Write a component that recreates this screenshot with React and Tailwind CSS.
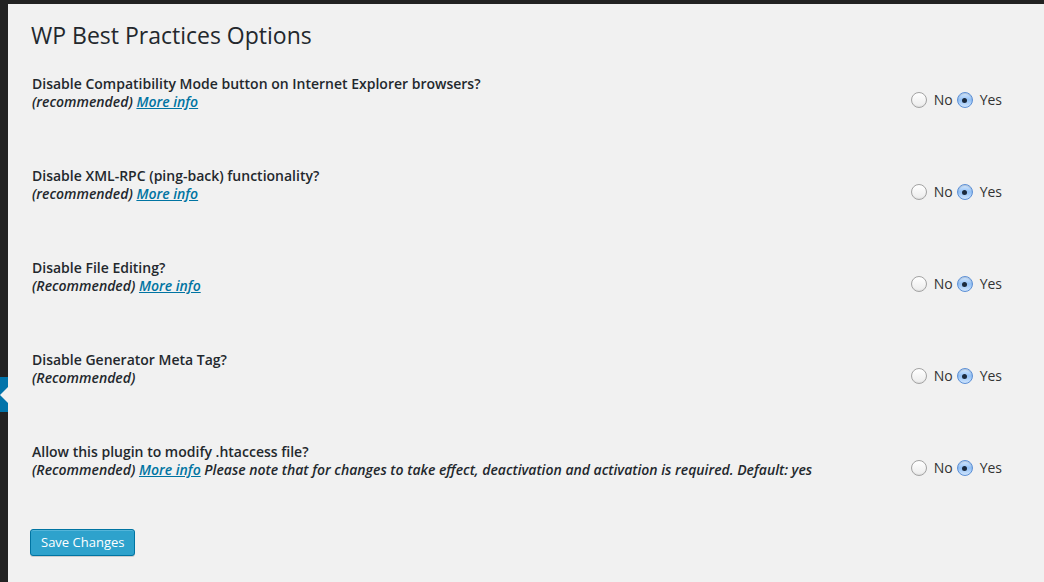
import React, { useState } from 'react';

const options = [
  {
    label: 'Disable Compatibility Mode button on Internet Explorer browsers?',
    note: '(recommended)',
    link: true,
  },
  { label: 'Disable XML-RPC (ping-back) functionality?', note: '(recommended)', link: true },
  { label: 'Disable File Editing?', note: '(Recommended)', link: true },
  { label: 'Disable Generator Meta Tag?', note: '(Recommended)', link: false },
  {
    label: 'Allow this plugin to modify .htaccess file?',
    note: '(Recommended)',
    link: true,
    extra: ' Please note that for changes to take effect, deactivation and activation is required. Default: yes',
  },
];

const Radio = ({ checked, onClick }) => (
  <button
    onClick={onClick}
    className={
      checked
        ? 'w-[16px] h-[16px] rounded-full border border-[#5b8fd6] bg-gradient-to-b from-[#d7e9fd] via-[#92c1f7] to-[#cfe4fc] flex items-center justify-center shadow-[inset_0_1px_1px_rgba(0,0,0,0.15)]'
        : 'w-[16px] h-[16px] rounded-full border border-[#a3a3a3] bg-gradient-to-b from-white to-[#ececec] shadow-[inset_0_-1px_1px_rgba(0,0,0,0.05)]'
    }
  >
    {checked && <span className="w-[5px] h-[5px] rounded-full bg-[#1b2a3d]"></span>}
  </button>
);

export default function App() {
  const [values, setValues] = useState(options.map(() => 'yes'));

  const setValue = (i, v) => {
    const next = [...values];
    next[i] = v;
    setValues(next);
  };

  return (
    <div className="w-[1044px] h-[582px] bg-[#222] flex overflow-hidden" style={{ fontFamily: '"Open Sans", sans-serif' }}>
      {/* Admin menu edge */}
      <div className="w-[8px] shrink-0 flex flex-col">
        <div className="h-[377px]"></div>
        <div className="relative h-[35px] bg-[#0073aa]">
          <div className="absolute left-0 top-[10px] w-0 h-0 border-y-[8px] border-y-transparent border-l-[8px] border-l-[#f1f1f1] rotate-180"></div>
        </div>
      </div>

      {/* Content */}
      <div className="flex-1 mt-[4px] bg-[#f1f1f1] pl-[23px] pr-[42px] pt-[17px] text-[#23282d]">
        <h2 className="text-[23px] leading-[29px] font-normal">WP Best Practices Options</h2>

        <div className="mt-[25px] flex flex-col gap-[56px]">
          {options.map((o, i) => (
            <div key={i} className="flex items-end justify-between pl-[1px]">
              <div className="text-[14px] leading-[18px]">
                <div className="font-semibold">{o.label}</div>
                <div className="italic font-semibold">
                  {o.note}
                  {o.link && (
                    <>
                      {' '}
                      <a href="#" className="text-[#0074a2] underline">More info</a>
                    </>
                  )}
                  {o.extra}
                </div>
              </div>
              <div className="flex items-center text-[14px] leading-[18px] text-[#333] mb-[2px]">
                <Radio checked={values[i] === 'no'} onClick={() => setValue(i, 'no')} />
                <span className="ml-[7px] mr-[4px]">No</span>
                <Radio checked={values[i] === 'yes'} onClick={() => setValue(i, 'yes')} />
                <span className="ml-[7px]">Yes</span>
              </div>
            </div>
          ))}
        </div>

        <button className="mt-[50px] -ml-[1px] h-[27px] px-[10px] rounded-[3px] bg-[#2ea2cc] border border-[#0074a2] text-white text-[13px] leading-[25px] shadow-[inset_0_1px_0_rgba(120,200,230,0.5),0_1px_0_rgba(0,0,0,0.15)]">
          Save Changes
        </button>
      </div>
    </div>
  );
}
